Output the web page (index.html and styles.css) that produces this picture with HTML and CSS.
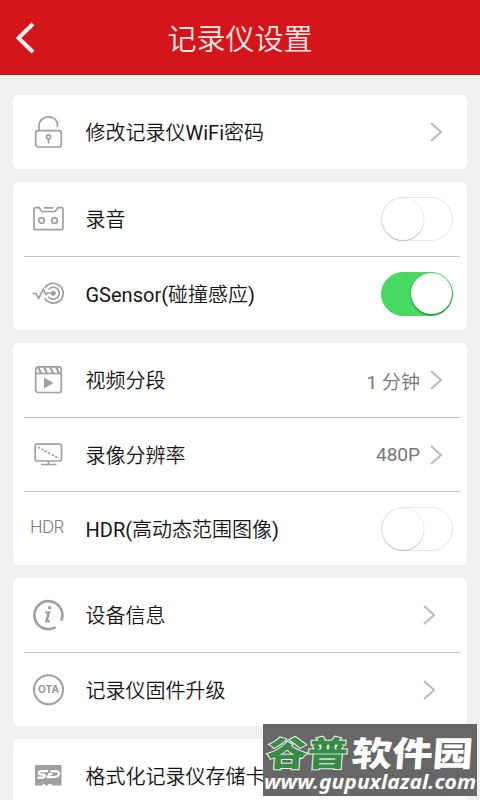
FILE: index.html
```
<!DOCTYPE html>
<html lang="zh-CN">
<head>
<meta charset="utf-8">
<title>记录仪设置</title>
<link rel="stylesheet" href="styles.css">
</head>
<body>
<header class="bar">
  <svg class="back" width="20" height="34" viewBox="0 0 20 34"><path d="M18 3 3.500 17 18 31"/></svg>
  <h1>记录仪设置</h1>
</header>
<main class="list">
  <section class="card">
    <div class="row">
      <svg class="icon" viewBox="0 0 36 36"><rect x="5.700" y="16.700" width="25.600" height="16.300" rx="2.500"/><path d="M9 16.500V12c0-12 18.500-12 18.500-.8v2"/><circle cx="18.500" cy="22.800" r="2"/><path d="M18.500 25v4.500"/></svg>
      <span class="label">修改记录仪<span class="latin">WiFi</span>密码</span>
      <svg class="chev" viewBox="0 0 12 20"><path d="M1 1l10 9-10 9"/></svg>
    </div>
  </section>
  <section class="card">
    <div class="row">
      <svg class="icon" viewBox="0 0 36 36"><path d="M6 6.700h3.200l2.500 3.800h13.600l2.500-3.800H31q2 0 2 2v18q0 2-2 2H6q-2 0-2-2v-18q0-2 2-2z M13.500 6.800h10"/><circle cx="11.500" cy="19.500" r="2.800"/><circle cx="24.500" cy="19.500" r="2.800"/></svg>
      <span class="label">录音</span>
      <span class="switch"></span>
    </div>
    <div class="row">
      <svg class="icon" viewBox="0 0 36 36"><path d="M2.500 17.500h3.200l3 4.700 4.600-9 2.300 5 2-1.200h6"/><circle cx="23.300" cy="17.200" r="2.500" class="fill"/><path d="M18.500 13.600a6 6 0 1 1 0 7.200M14.800 12.200a9.900 9.900 0 1 1 0 10"/></svg>
      <span class="label"><span class="latin">GSensor(</span>碰撞感应<span class="latin">)</span></span>
      <span class="switch on"></span>
    </div>
  </section>
  <section class="card">
    <div class="row">
      <svg class="icon" viewBox="0 0 36 36"><rect x="5.700" y="4.800" width="25.600" height="25.700" rx="2.500"/><path d="M6 11.500h25"/><path class="slate" d="M8 5l3 6M14 5l3 6M20 5l3 6M26 5l3 6"/><path class="fill" d="M14 15.500v11l9.500-5.500z"/></svg>
      <span class="label">视频分段</span>
      <span class="value"><span class="latin">1 </span>分钟</span>
      <svg class="chev" viewBox="0 0 12 20"><path d="M1 1l10 9-10 9"/></svg>
    </div>
    <div class="row">
      <svg class="icon" viewBox="0 0 36 36"><rect x="5.200" y="7.200" width="26.300" height="16.800" rx="1.800"/><path d="M18.500 24v3M11 27.500h15.500"/><path stroke-dasharray="2.400 1.500" d="M8 10l21 11.500"/></svg>
      <span class="label">录像分辨率</span>
      <span class="value latin">480P</span>
      <svg class="chev" viewBox="0 0 12 20"><path d="M1 1l10 9-10 9"/></svg>
    </div>
    <div class="row">
      <span class="hdr">HDR</span>
      <span class="label"><span class="latin">HDR(</span>高动态范围图像<span class="latin">)</span></span>
      <span class="switch"></span>
    </div>
  </section>
  <section class="card inset">
    <div class="row">
      <svg class="icon" viewBox="0 0 36 36"><path class="thick" d="M25.500 30.200A14 14 0 1 1 31.200 23.800"/><circle class="fill" cx="19.600" cy="10.800" r="1.700"/><path class="thick" d="M15.500 15.500h3.300l-2.300 8.700h3.300"/></svg>
      <span class="label">设备信息</span>
      <svg class="chev" viewBox="0 0 12 20"><path d="M1 1l10 9-10 9"/></svg>
    </div>
    <div class="row">
      <svg class="icon" viewBox="0 0 36 36"><circle class="ring" cx="18.500" cy="17.800" r="14.500"/><text class="ota" x="18.500" y="21.400" text-anchor="middle" textLength="21" lengthAdjust="spacingAndGlyphs">OTA</text></svg>
      <span class="label">记录仪固件升级</span>
      <svg class="chev" viewBox="0 0 12 20"><path d="M1 1l10 9-10 9"/></svg>
    </div>
  </section>
  <section class="card inset">
    <div class="row">
      <svg class="icon" viewBox="0 0 36 36"><path class="sd" d="M6 7h24.500q1 0 1 1v18.500q0 1-1 1h-8l-1.500-1.500h-2.500l-1 1.500h-2l-1-1.500h-1.500l-1 1.500H6q-1 0-1-1V8q0-1 1-1z"/><path class="mark" d="M18 13.200h-6.500q-2.500 0-2.700 1.700 0 1.200 2 1.500l3.500.5q1.800 1.200-.8 2.700H7.500M20.500 13.200h4.500q4.500 0 4 2.500-.8 3.500-6.500 3.500H18l1.200-3h3"/></svg>
      <span class="label">格式化记录仪存储卡</span>
      <svg class="chev" viewBox="0 0 12 20"><path d="M1 1l10 9-10 9"/></svg>
    </div>
  </section>
</main>
<aside class="stamp">
  <svg width="214" height="72" viewBox="0 0 214 72">
    <g transform="skewX(-4)">
      <text class="brand green" x="6" y="42" textLength="81" lengthAdjust="spacingAndGlyphs">谷普</text>
      <text class="brand" x="91" y="42" textLength="121" lengthAdjust="spacingAndGlyphs">软件园</text>
    </g>
    <text class="url" x="1" y="65" textLength="212" lengthAdjust="spacingAndGlyphs">www.gupuxlazal.com</text>
  </svg>
</aside>
</body>
</html>
```

FILE: styles.css
```
* { box-sizing: border-box; }
html, body { height: 100%; }
body {
  margin: 0;
  overflow: hidden;
  position: relative;
  background: #f0f0f0;
  color: #151515;
  font-family: Roboto, "Noto Sans CJK SC", sans-serif;
}
svg { display: block; flex: none; fill: none; }
.bar {
  height: 75px;
  padding: 6px 15px 0;
  display: grid;
  grid-template-columns: 20px 1fr 20px;
  align-items: center;
  background: #d41519;
  border-bottom: 1px solid #a82325;
}
.back { stroke: #fff0f0; stroke-width: 4; margin-top: -5px; }
h1 {
  margin: 0;
  text-align: center;
  font-size: 29px;
  font-weight: 350;
  line-height: 40px;
  color: #ffe9e9;
}
.list {
  display: flex;
  flex-direction: column;
  gap: 13.100px;
  padding: 20px 13px 0;
}
.card {
  flex: none;
  padding: 0 7px 0 11px;
  border-radius: 6px;
  background: #fff;
}
.row {
  height: 74px;
  display: flex;
  align-items: center;
  padding: 0 18px 0 6px;
}
.row + .row { border-top: 1.500px solid #c4c4c4; }
.inset .row { padding-right: 25px; }
.icon { width: 36px; height: 36px; stroke: #a0a0a0; stroke-width: 1.700; }
.icon .fill { fill: #a0a0a0; stroke: none; }
.icon .slate { stroke-width: 2.200; }
.icon .thick { stroke-width: 2.600; }
.icon .ring { stroke-width: 2; }
.icon .sd { fill: #a0a0a0; stroke: none; }
.icon .mark { stroke: #fff; stroke-width: 2.200; }
.ota { fill: #999; stroke: none; font: 700 10px Inter, sans-serif; }
.hdr {
  width: 36px;
  padding-bottom: 3px;
  font: 300 17px Inter, sans-serif;
  letter-spacing: -0.600px;
  color: #808080;
}
.label {
  flex: 1;
  margin-left: 19.500px;
  padding-top: 2px;
  font-size: 20px;
  font-weight: 350;
  line-height: 28px;
  white-space: nowrap;
}
.value { font-size: 19px; font-weight: 350; color: #777; margin-right: 10px; }
.latin { font-weight: 400; }
.chev { width: 12px; height: 20px; stroke: #bcbcbc; stroke-width: 2; }
.switch {
  width: 72px;
  height: 44px;
  margin-right: -11px;
  border-radius: 22px;
  border: 1px solid #e5e5e5;
  display: flex;
}
.switch::before {
  content: "";
  width: 42px;
  height: 42px;
  border-radius: 50%;
  background: #fff;
  box-shadow: 0 1px 1px #bbb, 0 0 1px #ccc;
}
.switch.on {
  justify-content: flex-end;
  background: #48d962;
  border-color: #48d962;
}
.switch.on::before { width: 41px; height: 41px; box-shadow: 0 1px 2px #176b2b; }
.stamp {
  position: absolute;
  left: 263px;
  top: 724px;
  width: 214px;
  height: 72px;
  background: rgba(94, 94, 94, .94);
}
.brand {
  font: 900 34px "Noto Sans CJK SC", sans-serif;
  fill: #fff;
}
.brand.green {
  fill: #388b46;
  stroke: #e6f0e6;
  stroke-width: 2;
  paint-order: stroke;
}
.url { font: italic 700 20px "Noto Sans", sans-serif; fill: #fff; }
```
